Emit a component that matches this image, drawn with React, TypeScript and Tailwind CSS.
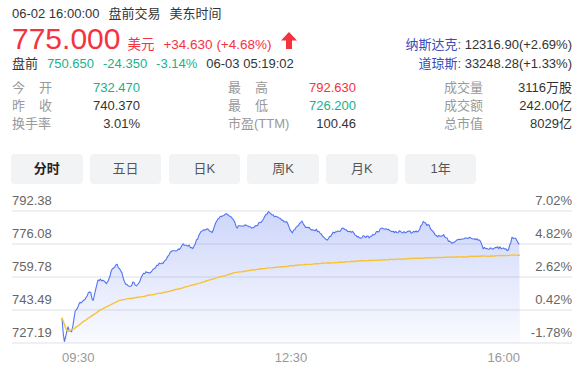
import React from "react";

const FONT = { fontFamily: '"Liberation Sans", Arial, "Noto Sans CJK SC", sans-serif' };

// price path, in chart pixels (x: 09:30 -> 16:00)
const pricePts: [number, number][] = [
  [62, 318], [64, 343], [68, 328], [72, 332], [75, 312], [80, 303], [85, 300], [90, 290], [93, 302],
  [98, 280], [103, 280], [107, 283], [112, 270], [117, 265], [122, 273], [125, 283], [130, 288],
  [133, 282], [137, 287], [143, 273], [150, 272], [157, 265], [163, 263], [172, 250], [177, 252],
  [182, 245], [188, 245], [193, 248], [200, 233], [207, 228], [212, 232], [218, 218], [227, 214],
  [233, 220], [237, 227], [247, 225], [253, 228], [260, 223], [268, 212], [277, 217], [287, 222],
  [292, 233], [298, 225], [302, 222], [307, 228], [317, 230], [327, 240], [333, 233], [343, 229],
  [353, 232], [358, 237], [370, 237], [383, 228], [393, 232], [407, 232], [418, 232], [423, 222],
  [430, 227], [437, 237], [443, 235], [452, 244], [457, 239], [470, 238], [480, 240], [483, 248],
  [490, 249], [497, 247], [508, 250], [512, 238], [517, 240], [520, 246],
];

const avgPts: [number, number][] = [
  [62, 318], [67, 332], [75, 328], [83, 322], [100, 310], [120, 300], [140, 297], [167, 292],
  [200, 283], [233, 273], [267, 268], [300, 265], [357, 261], [423, 258], [490, 256], [520, 255],
];

function interp(pts: [number, number][], x: number) {
  for (let i = 1; i < pts.length; i++) {
    const [x0, y0] = pts[i - 1];
    const [x1, y1] = pts[i];
    if (x <= x1) return y0 + ((y1 - y0) * (x - x0)) / (x1 - x0 || 1);
  }
  return pts[pts.length - 1][1];
}

function rng(seed: number) {
  return () => {
    seed |= 0;
    seed = (seed + 0x6d2b79f5) | 0;
    let t = Math.imul(seed ^ (seed >>> 15), 1 | seed);
    t = (t + Math.imul(t ^ (t >>> 7), 61 | t)) ^ t;
    return ((t ^ (t >>> 14)) >>> 0) / 4294967296;
  };
}

const rand = rng(7);
const priceLine: string[] = [];
for (let x = 62; x <= 520; x += 1.2) {
  const noise = x < 66 || x > 518 ? 0 : (rand() - 0.5) * 2.4;
  priceLine.push(`${x.toFixed(1)},${(interp(pricePts, x) + noise).toFixed(1)}`);
}
const pricePath = "M" + priceLine.join(" L");
const areaPath = pricePath + " L520,343 L62,343 Z";
const avgLine: string[] = [];
for (let x = 62; x <= 520; x += 2) {
  avgLine.push(`${x},${(interp(avgPts, x) + (rand() - 0.5) * 0.6).toFixed(1)}`);
}

const stats = [
  [
    { label: ["今", "开"], value: "732.470", color: "text-[#16b38c]" },
    { label: ["最", "高"], value: "792.630", color: "text-[#f5333f]" },
    { label: ["成交量"], value: "3116万股", color: "text-[#333]" },
  ],
  [
    { label: ["昨", "收"], value: "740.370", color: "text-[#333]" },
    { label: ["最", "低"], value: "726.200", color: "text-[#16b38c]" },
    { label: ["成交额"], value: "242.00亿", color: "text-[#333]" },
  ],
  [
    { label: ["换手率"], value: "3.01%", color: "text-[#333]" },
    { label: ["市盈(TTM)"], value: "100.46", color: "text-[#333]" },
    { label: ["总市值"], value: "8029亿", color: "text-[#333]" },
  ],
];

const tabs = ["分时", "五日", "日K", "周K", "月K", "1年"];

const leftAxis = ["792.38", "776.08", "759.78", "743.49", "727.19"];
const rightAxis = ["7.02%", "4.82%", "2.62%", "0.42%", "-1.78%"];
const grid = [211, 244, 277, 310, 343];

export default function App() {
  return (
    <div className="w-[584px] h-[367px] bg-white px-3 overflow-hidden" style={FONT}>
      {/* Quote header */}
      <div className="flex justify-between pt-[5px]">
        <div className="flex flex-col">
          <div className="flex gap-[9px] h-[18px] leading-[18px] text-[13px] text-[#333]">
            <span>06-02 16:00:00</span>
            <span>盘前交易</span>
            <span>美东时间</span>
          </div>
          <div className="flex items-baseline h-[32px] leading-[32px] text-[#f5333f]">
            <span className="text-[30px]">775.000</span>
            <span className="ml-[7px] text-[13.5px]">美元</span>
            <span className="ml-[9px] text-[13.5px]">+34.630 (+4.68%)</span>
            <svg className="ml-[9px] self-center mt-[2px]" width="16" height="17" viewBox="0 0 16 17">
              <path d="M8 0 L16 8.5 L11 8.5 L11 17 L5 17 L5 8.5 L0 8.5 Z" fill="#f5333f" />
            </svg>
          </div>
          <div className="flex gap-[9px] h-[18px] leading-[18px] text-[13px]">
            <span className="text-[#333]">盘前</span>
            <span className="text-[#16b38c]">750.650</span>
            <span className="text-[#16b38c]">-24.350</span>
            <span className="text-[#16b38c]">-3.14%</span>
            <span className="text-[#333]">06-03 05:19:02</span>
          </div>
        </div>
        <div className="flex flex-col items-end justify-end text-[13px] leading-[19px]">
          <div>
            <span className="text-[#3a4cb8]">纳斯达克: </span>
            <span className="text-[#333]">12316.90(+2.69%)</span>
          </div>
          <div>
            <span className="text-[#3a4cb8]">道琼斯: </span>
            <span className="text-[#333]">33248.28(+1.33%)</span>
          </div>
        </div>
      </div>

      {/* Stats */}
      <div className="mt-[6px] flex flex-col text-[13px] leading-[18px]">
        {stats.map((row, r) => (
          <div key={r} className="grid grid-cols-[128px_128px_128px] justify-between">
            {row.map((c, i) => (
              <div key={i} className="flex justify-between">
                <span
                  className={`text-[#999] flex ${c.label.length === 2 ? "w-[40px] justify-between" : ""}`}
                >
                  {c.label.map((l) => (
                    <span key={l}>{l}</span>
                  ))}
                </span>
                <span className={c.color}>{c.value}</span>
              </div>
            ))}
          </div>
        ))}
      </div>

      {/* Tabs */}
      <div className="mt-[21px] -ml-px flex gap-[7.3px]">
        {tabs.map((t, i) => (
          <div
            key={t}
            className={`w-[71.5px] h-[30px] rounded-[4px] bg-[#f2f3f5] flex items-center justify-center text-[13px] ${
              i === 0 ? "font-bold text-[#222]" : "text-[#555]"
            }`}
          >
            {t}
          </div>
        ))}
      </div>

      {/* Chart */}
      <svg className="mt-[6px] block" width="560" height="177" viewBox="12 190 560 177">
        <defs>
          <linearGradient id="fill" x1="0" y1="0" x2="0" y2="1">
            <stop offset="0" stopColor="#5b78ef" stopOpacity="0.3" />
            <stop offset="1" stopColor="#5b78ef" stopOpacity="0.03" />
          </linearGradient>
        </defs>
        {grid.map((y) => (
          <line key={y} x1="12" x2="572" y1={y} y2={y} stroke="#eff0f3" strokeWidth="2" />
        ))}
        <path d={areaPath} fill="url(#fill)" />
        <path d={pricePath} fill="none" stroke="#5373f2" strokeWidth="1.1" strokeLinejoin="round" />
        <polyline points={avgLine.join(" ")} fill="none" stroke="#f6c338" strokeWidth="1.4" strokeLinejoin="round" />
        {leftAxis.map((v, i) => (
          <text key={v} x="12" y={grid[i] - 6.5} fontSize="13" fill="#666" style={FONT}>
            {v}
          </text>
        ))}
        {rightAxis.map((v, i) => (
          <text key={v} x="572" y={grid[i] - 6.5} fontSize="13" fill="#666" textAnchor="end" style={FONT}>
            {v}
          </text>
        ))}
        <text x="62" y="361.5" fontSize="13" fill="#999" style={FONT}>09:30</text>
        <text x="291" y="361.5" fontSize="13" fill="#999" textAnchor="middle" style={FONT}>12:30</text>
        <text x="520" y="361.5" fontSize="13" fill="#999" textAnchor="end" style={FONT}>16:00</text>
      </svg>
    </div>
  );
}
